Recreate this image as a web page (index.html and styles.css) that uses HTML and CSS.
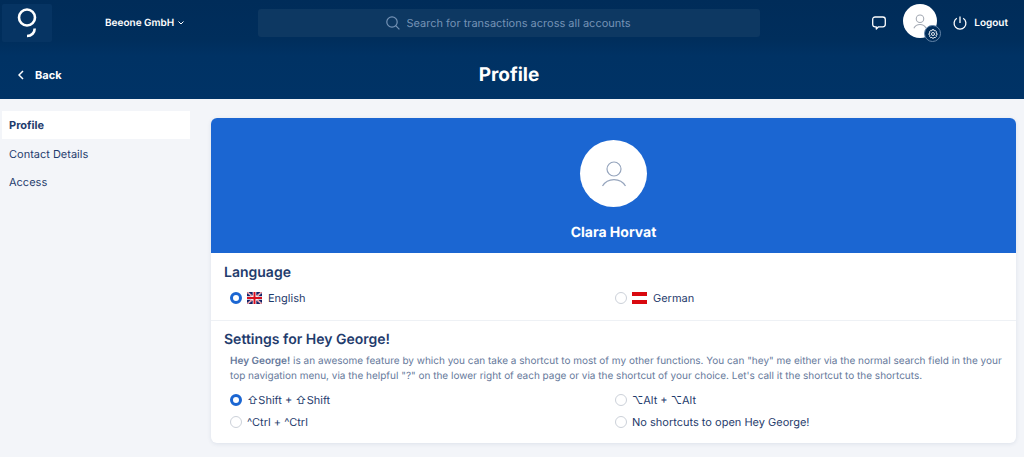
FILE: index.html
```html
<!DOCTYPE html>
<html lang="en">
<head>
    <meta charset="UTF-8">
    <meta name="viewport" content="width=device-width, initial-scale=1.0">
    <title>Profile</title>
    <link rel="stylesheet" href="styles.css">
</head>
<body>
    <header class="header">
        <div class="topbar">
            <div class="topbar-left">
                <a class="logo" href="#" aria-label="George">
                    <svg width="20" height="30" viewBox="0 0 20 30" fill="none" stroke="#fff" stroke-width="2.600">
                        <circle cx="10" cy="9.500" r="8"/>
                        <path d="M17.700 20.500c0 4-3 7.500-7.700 7.500"/>
                    </svg>
                </a>
                <button class="company" type="button">
                    Beeone GmbH
                    <svg width="6" height="4" viewBox="0 0 6 4" fill="none" stroke="currentColor"><path d="M.5.500 3 3 5.500.5"/></svg>
                </button>
            </div>
            <label class="search">
                <svg width="14" height="14" viewBox="0 0 14 14" fill="none" stroke="currentColor" stroke-width="1.200"><circle cx="6" cy="6" r="5.200"/><path d="M9.700 9.700 13.400 13.400"/></svg>
                <input type="text" placeholder="Search for transactions across all accounts" aria-label="Search">
            </label>
            <div class="topbar-right">
                <button class="messages" type="button" aria-label="Messages">
                    <svg width="14" height="14" viewBox="0 0 14 14" fill="none" stroke="currentColor" stroke-width="1.300" stroke-linejoin="round"><path d="M3.200 1h7.600q2.500 0 2.500 2.500v4.800q0 2.500-2.500 2.500H6.500L4.300 13v-2.200H3.200q-2.500 0-2.500-2.500V3.500q0-2.500 2.500-2.500z"/></svg>
                </button>
                <button class="user" type="button" aria-label="Account">
                    <svg width="14" height="15" viewBox="0 0 26 28" fill="none" stroke="#a3a9b3" stroke-width="2"><circle cx="13" cy="9" r="7"/><path d="M1.500 26.500c5-9 18-9 23 0"/></svg>
                    <span class="user-badge">
                        <svg width="10" height="10" viewBox="0 0 20 20" fill="none" stroke="#fff" stroke-width="1.800"><path d="M8 1.500h4l.6 2.300 2.200-.8 2.400 3.100L15.800 8l2.400 1v2.500l-2.400 1 1 2.500-2.500 2.500-2.200-1-.9 2H8.800l-1-2-2.300 1L3.200 15l1-2.500-2.400-1V9l2.400-1-1.400-1.900L5.200 3l2.200.8z"/><circle cx="10" cy="10" r="3"/></svg>
                    </span>
                </button>
                <button class="logout" type="button">
                    <svg width="14" height="14" viewBox="0 0 14 14" fill="none" stroke="currentColor" stroke-width="1.300"><path d="M7 .5v6.500M3.800 2.300a5.900 5.900 0 1 0 6.400 0"/></svg>
                    Logout
                </button>
            </div>
        </div>
        <div class="titlebar">
            <a class="back" href="#">
                <svg width="6" height="10" viewBox="0 0 6 10" fill="none" stroke="currentColor" stroke-width="1.500"><path d="M5 1 1 5l4 4"/></svg>
                Back
            </a>
            <h1>Profile</h1>
        </div>
    </header>

    <div class="layout">
        <nav class="sidebar">
            <a class="active" href="#">Profile</a>
            <a href="#">Contact Details</a>
            <a href="#">Access</a>
        </nav>

        <main class="card">
            <div class="hero">
                <div class="avatar">
                    <svg width="26" height="28" viewBox="0 0 26 28" fill="none" stroke="#96a5bd" stroke-width="1.200"><circle cx="13" cy="9" r="7"/><path d="M1.500 26c5-8.500 18-8.500 23 0"/></svg>
                </div>
                <p class="name">Clara Horvat</p>
            </div>

            <section class="section">
                <h2>Language</h2>
                <div class="options">
                    <label class="option">
                        <input type="radio" name="language" checked>
                        <svg class="flag" width="15" height="12" viewBox="0 0 15 12">
                            <path fill="#151f63" d="M0 0h15v12H0z"/>
                            <path stroke="#fff" stroke-width="1.600" d="m0 0 15 12M15 0 0 12"/>
                            <path stroke="#d80f1e" stroke-width=".6" d="m0 0 15 12M15 0 0 12"/>
                            <path stroke="#fff" stroke-width="3.600" d="M7.500 0v12M0 6h15"/>
                            <path stroke="#d80f1e" stroke-width="2" d="M7.500 0v12M0 6h15"/>
                        </svg>
                        English
                    </label>
                    <label class="option">
                        <input type="radio" name="language">
                        <svg class="flag" width="15" height="12" viewBox="0 0 15 12">
                            <path fill="#d9090f" d="M0 0h15v12H0z"/>
                            <path fill="#fff" d="M0 4h15v4H0z"/>
                        </svg>
                        German
                    </label>
                </div>
            </section>

            <section class="section">
                <h2>Settings for Hey George!</h2>
                <p class="hint"><strong>Hey George!</strong> is an awesome feature by which you can take a shortcut to most of my other functions. You can "hey" me either via the normal search field in the your top navigation menu, via the helpful "?" on the lower right of each page or via the shortcut of your choice. Let's call it the shortcut to the shortcuts.</p>
                <div class="options">
                    <label class="option"><input type="radio" name="shortcut" checked>⇧Shift + ⇧Shift</label>
                    <label class="option"><input type="radio" name="shortcut">⌥Alt + ⌥Alt</label>
                    <label class="option"><input type="radio" name="shortcut">^Ctrl + ^Ctrl</label>
                    <label class="option"><input type="radio" name="shortcut">No shortcuts to open Hey George!</label>
                </div>
            </section>
        </main>
    </div>
</body>
</html>
```
FILE: styles.css
```css
* {
    box-sizing: border-box;
}
body {
    margin: 0;
    background: #f3f5f9;
    color: #1f3c6d;
    font-family: Inter, "Liberation Sans", sans-serif;
    font-size: 11px;
    text-rendering: geometricPrecision;
}
h1, h2, p {
    margin: 0;
}
a {
    color: inherit;
    text-decoration: none;
}
button {
    padding: 0;
    border: none;
    background: none;
    color: inherit;
    font: inherit;
    text-rendering: inherit;
    cursor: pointer;
}
svg {
    display: block;
    flex: none;
}

/* Header */
.header {
    background: linear-gradient(#002c59, #002e5c 40px, #003264 56px, #003366);
    color: white;
}
.topbar {
    display: grid;
    grid-template-columns: 256px 1fr 256px;
    align-items: center;
    height: 46px;
    padding: 0 8px 0 2px;
}
.topbar-left {
    display: flex;
    align-items: center;
    gap: 53px;
}
.logo {
    display: flex;
    align-items: center;
    justify-content: center;
    width: 50px;
    height: 38px;
    border-radius: 2px;
    background: #063463;
}
.company {
    display: flex;
    align-items: center;
    gap: 4px;
    font-size: 10px;
    font-weight: 600;
}
.search {
    display: flex;
    align-items: center;
    justify-content: center;
    gap: 7px;
    height: 28px;
    border-radius: 3px;
    background: #0d3862;
    color: #7593b6;
}
.search input {
    width: 226px;
    padding: 0;
    border: none;
    outline: none;
    background: none;
    color: inherit;
    font: inherit;
    text-rendering: inherit;
}
.search input::placeholder {
    color: inherit;
}
.topbar-right {
    display: flex;
    align-items: center;
    justify-content: flex-end;
    padding-right: 8px;
}
.messages {
    margin-right: 17px;
}
.user {
    position: relative;
    display: flex;
    align-items: center;
    justify-content: center;
    width: 34px;
    height: 34px;
    margin: 0 16px 4px 0;
    border-radius: 50%;
    background: white;
}
.user-badge {
    position: absolute;
    right: -4px;
    bottom: -4px;
    display: flex;
    align-items: center;
    justify-content: center;
    width: 17px;
    height: 17px;
    border: 1px solid #6485a9;
    border-radius: 50%;
    background: #002d5b;
}
.logout {
    display: flex;
    align-items: center;
    gap: 7px;
    font-size: 10px;
    font-weight: 600;
}
.titlebar {
    display: grid;
    grid-template-columns: 1fr auto 1fr;
    align-items: center;
    height: 53px;
    padding: 4px 8px 0 2px;
}
.back {
    display: flex;
    align-items: center;
    gap: 11px;
    padding-left: 16px;
    font-weight: 700;
}
.titlebar h1 {
    font-size: 19px;
    font-weight: 700;
    line-height: 24px;
}

/* Content */
.layout {
    display: grid;
    grid-template-columns: 188px 1fr;
    gap: 21px;
    padding: 12px 8px 14px 2px;
}
.sidebar a {
    display: block;
    padding: 0 7px;
    line-height: 28px;
}
.sidebar .active {
    margin-bottom: 1px;
    background: white;
    font-weight: 700;
}
.card {
    margin-top: 7px;
    border-radius: 6px;
    background: white;
    box-shadow: 0 1px 4px rgba(31, 60, 109, 0.1);
    overflow: hidden;
}
.hero {
    display: flex;
    flex-direction: column;
    align-items: center;
    gap: 16px;
    padding: 22px 0 10px;
    background: #1b66d2;
    color: white;
}
.avatar {
    display: flex;
    align-items: center;
    justify-content: center;
    width: 67px;
    height: 67px;
    border-radius: 50%;
    background: white;
}
.name {
    font-size: 14px;
    font-weight: 700;
    line-height: 20px;
}
.section {
    padding: 10px 13px;
}
.section + .section {
    padding-top: 9px;
    border-top: 1px solid #eef1f5;
}
.section h2 {
    font-size: 14px;
    font-weight: 600;
    line-height: 20px;
}
.hint {
    padding: 4px 0 5px 6px;
    color: #66799b;
    font-size: 10px;
    line-height: 15px;
}
.hint strong {
    font-weight: 600;
}
.options {
    display: grid;
    grid-template-columns: 1fr 1fr;
    padding: 0 3px 0 6px;
}
.section h2 + .options {
    padding-top: 4px;
    padding-bottom: 1px;
}
.option {
    display: flex;
    align-items: center;
    height: 22px;
}
.option input {
    appearance: none;
    width: 12px;
    height: 12px;
    margin: 0 5px 0 0;
    border: 1px solid #ccd1d9;
    border-radius: 50%;
    background: white;
}
.option input:checked {
    border: 3px solid #1b66d2;
}
.flag {
    margin-right: 6px;
}
```
